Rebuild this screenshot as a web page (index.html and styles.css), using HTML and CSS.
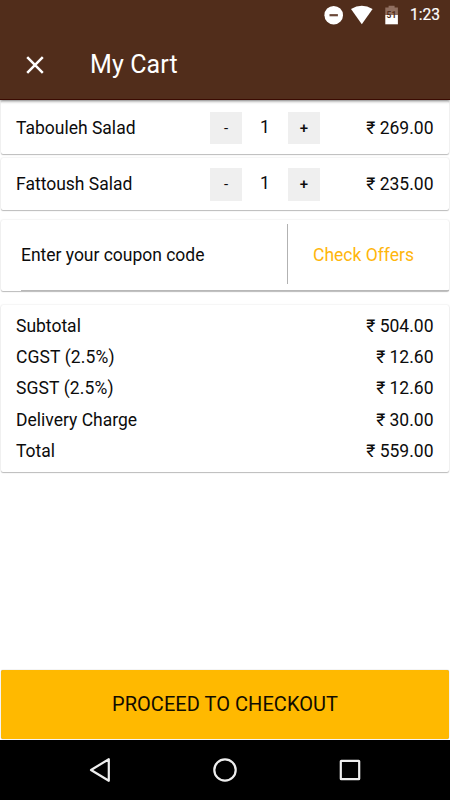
FILE: index.html
```html
<!DOCTYPE html>
<html lang="en">
<head>
<meta charset="utf-8">
<title>My Cart</title>
<link rel="stylesheet" href="styles.css">
</head>
<body>
<div class="screen">
  <header class="top">
    <div class="status">
      <svg class="status-icons" width="100" height="30" viewBox="0 0 100 30">
        <circle cx="23.7" cy="15.2" r="9.3" fill="#fff"/>
        <path d="M19.5 15.2h8.4" stroke="#6b4939" stroke-width="2.2"/>
        <path d="M51.8 24.2 41 9Q51.8 2.5 62.6 9Z" fill="#fff"/>
        <path d="M75.3 15V7.5h3.3V5.8h6v1.7h3.3V15Z" fill="#906f60"/>
        <path d="M75.3 15h12.6v9.3H75.3Z" fill="#fff"/>
        <text class="battery-level" x="81.5" y="18" text-anchor="middle">51</text>
      </svg>
      <span class="time">1:23</span>
    </div>
    <div class="toolbar">
      <svg class="close" width="20" height="20" viewBox="0 0 20 20"><path d="m2.2 2.2 15.6 15.6M17.8 2.2 2.2 17.8"/></svg>
      <h1 class="title">My Cart</h1>
    </div>
  </header>
  <main class="content">
    <section class="card item first">
      <span class="name">Tabouleh Salad</span>
      <div class="stepper"><button class="step">-</button><span class="count">1</span><button class="step plus">+</button></div>
      <span class="price">₹ 269.00</span>
    </section>
    <section class="card item second">
      <span class="name">Fattoush Salad</span>
      <div class="stepper"><button class="step">-</button><span class="count">1</span><button class="step plus">+</button></div>
      <span class="price">₹ 235.00</span>
    </section>
    <section class="card coupon">
      <div class="coupon-row">
        <span class="code">Enter your coupon code</span>
        <span class="offers">Check Offers</span>
      </div>
    </section>
    <section class="card summary">
      <div class="line"><span>Subtotal</span><span class="amount">₹ 504.00</span></div>
      <div class="line"><span class="tax">CGST (2.5%)</span><span class="amount">₹ 12.60</span></div>
      <div class="line"><span class="tax">SGST (2.5%)</span><span class="amount">₹ 12.60</span></div>
      <div class="line"><span>Delivery Charge</span><span class="amount">₹ 30.00</span></div>
      <div class="line"><span>Total</span><span class="amount">₹ 559.00</span></div>
    </section>
    <button class="checkout">PROCEED TO CHECKOUT</button>
  </main>
  <nav class="navbar">
    <svg width="26" height="26" viewBox="0 0 26 26"><path d="M21.8 2.2v21.6L4 13Z"/></svg>
    <svg width="26" height="26" viewBox="0 0 26 26"><circle cx="13" cy="13" r="10.7"/></svg>
    <svg width="26" height="26" viewBox="0 0 26 26"><rect x="3.8" y="3.8" width="18.4" height="18.4" rx=".5"/></svg>
  </nav>
</div>
</body>
</html>
```

FILE: styles.css
```css
* { box-sizing: border-box; }
body {
  margin: 0;
  font-family: Roboto, "Noto Sans", sans-serif;
  font-size: 17.5px;
  line-height: 21px;
  color: #0c0c0c;
  background: #fff;
}
button { border: 0; padding: 0; font-family: inherit; color: inherit; }
.screen { width: 450px; height: 800px; display: flex; flex-direction: column; overflow: hidden; }
.top {
  height: 100px;
  flex: none;
  background: #512d1b;
  border-bottom: 1px solid #3a0b02;
  color: #fff;
  box-shadow: 0 1px 3px rgba(0, 0, 0, .5);
  z-index: 1;
}
.status { height: 30px; display: flex; justify-content: flex-end; padding-right: 10px; }
.time { width: 30px; line-height: 31px; font-size: 15.6px; font-weight: 400; -webkit-text-stroke: .2px #fff; white-space: nowrap; display: flex; justify-content: flex-end; }
.battery-level { font-size: 8.5px; font-weight: 700; fill: #512d1b; }
.toolbar { height: 70px; display: flex; align-items: center; padding-left: 25px; }
.close { fill: none; stroke: #fff; stroke-width: 2.5; }
.title { margin: 0 0 0 45px; font-size: 25px; font-weight: 400; line-height: 30px; letter-spacing: .1px; }
.content { flex: 1; display: flex; flex-direction: column; padding: 1px 1px 0; }
.card { flex: none; background: #fff; border-radius: 2px; box-shadow: 0 1px 1px rgba(0, 0, 0, .24), 0 0 2px rgba(0, 0, 0, .14); }
.item { height: 53px; display: grid; grid-template-columns: 194px 110px 1fr; align-items: center; padding: 0 15.5px 0 15px; }
.first .name, .first .price { padding-top: 2px; }
.second { height: 52px; margin-top: 4px; }
.second .name, .second .price { padding-top: 1px; }
.price { text-align: right; }
.stepper { display: flex; height: 32px; }
.step { width: 32px; height: 32px; background: #efefef; font-size: 15px; }
.plus { font-weight: 500; }
.count { width: 46px; text-align: center; line-height: 30px; }
.second .stepper, .second .step { height: 33px; }
.coupon { height: 71px; margin-top: 10px; padding-left: 20px; }
.coupon-row { height: 71px; display: grid; grid-template-columns: 267px 1fr; border-bottom: 1.5px solid #b8b8b8; }
.code { line-height: 60px; height: 60px; margin-top: 4px; padding-top: 1px; border-right: 1px solid #b2b2b2; letter-spacing: -.02px; }
.offers { line-height: 60px; margin-top: 5px; padding-left: 25px; color: #ffb60c; }
.summary { margin-top: 14px; height: 167px; padding: 6px 15.5px 6px 15px; }
.line { height: 31.2px; line-height: 31.2px; display: flex; justify-content: space-between; }
.tax { letter-spacing: .12px; }
.checkout { margin-top: auto; margin-bottom: 1px; flex: none; height: 69px; padding-bottom: 1px; border-radius: 2px; background: #ffb900; font-size: 20px; letter-spacing: .05px; color: #110c00; box-shadow: 0 0 1px rgba(0, 0, 0, .45); }
.navbar { height: 60px; flex: none; background: #000; display: flex; justify-content: space-between; align-items: center; padding: 0 87px; z-index: 1; }
.navbar svg { fill: none; stroke: #eee; stroke-width: 2.2; stroke-linejoin: round; }
```
